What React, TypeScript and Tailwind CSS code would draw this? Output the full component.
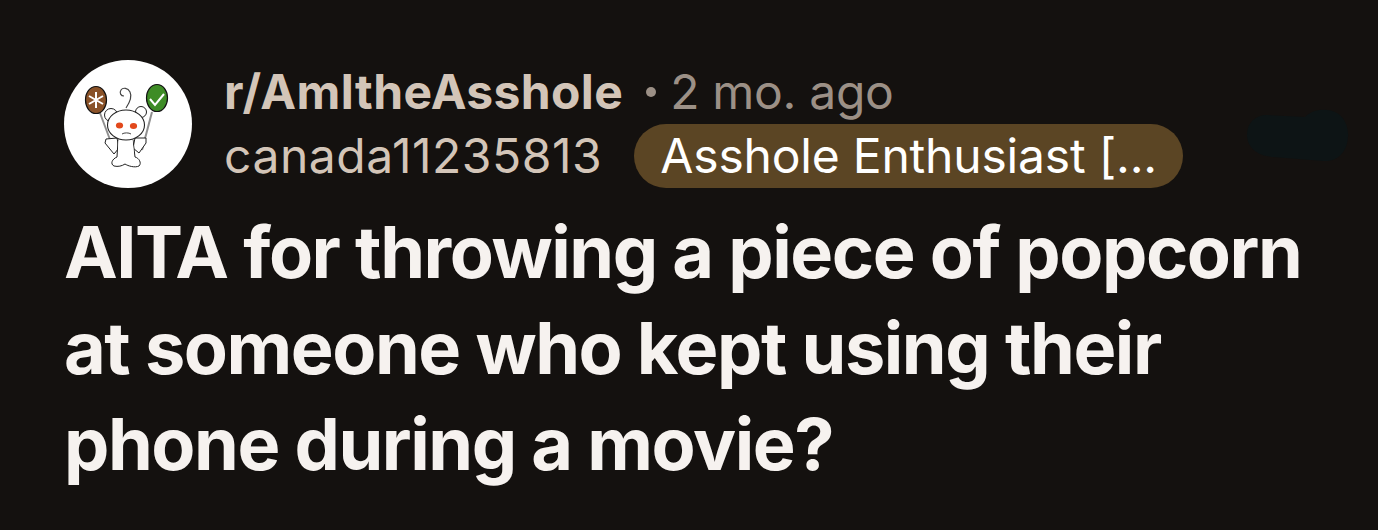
const Snoo = () => (
  <svg viewBox="0 0 128 128" className="w-32 h-32 shrink-0 rounded-full bg-white">
    {/* balloon strings */}
    <path d="M36 53 L51 93" stroke="#8f8f8f" strokeWidth="2" fill="none" />
    <path d="M88 52 L78 90" stroke="#8f8f8f" strokeWidth="2" fill="none" />
    {/* antenna */}
    <path d="M62 48 C66 42 68 36 66 32 C64 28 59 27 57 30 C55 33 57 36 60 36" stroke="#444" strokeWidth="1.2" fill="none" />
    {/* arms */}
    <path d="M53 78 L42 79 L41 83 L50 94 L55 88 Z" fill="#fff" stroke="#222" strokeWidth="1" />
    <path d="M71 78 L82 78 L82 83 L75 93 L69 88 Z" fill="#fff" stroke="#222" strokeWidth="1" />
    {/* body and feet */}
    <path d="M54 80 L53 97 C48 99 46 104 50 106 C54 107 58 106 61 104 C64 106 71 108 75 106 C78 103 75 98 71 97 L69 80 Z" fill="#fff" stroke="#222" strokeWidth="1" />
    <path d="M54.5 78 H68.5 L70 96 H54 Z" fill="#fff" />
    {/* ears */}
    <circle cx="47" cy="55" r="6.5" fill="#fff" stroke="#222" strokeWidth="1" />
    <circle cx="77" cy="52" r="5.5" fill="#fff" stroke="#222" strokeWidth="1" />
    {/* head */}
    <ellipse cx="62" cy="65" rx="18.5" ry="15" fill="#fff" stroke="#222" strokeWidth="1.1" />
    <ellipse cx="55.5" cy="65.5" rx="3.6" ry="3" fill="#e2491c" />
    <ellipse cx="69.5" cy="66" rx="3.6" ry="3" fill="#e2491c" />
    <path d="M58 74 C60 72.5 65 72.5 67 74" stroke="#444" strokeWidth="1" fill="none" />
    {/* brown balloon */}
    <ellipse cx="32" cy="40" rx="10.5" ry="13.5" fill="#8a5228" stroke="#111" strokeWidth="1.2" />
    <path d="M32 32 V48 M25 36 L39 44 M39 36 L25 44" stroke="#fff" strokeWidth="2" />
    {/* green balloon */}
    <ellipse cx="93" cy="38" rx="10.5" ry="13.5" fill="#3e8c26" stroke="#111" strokeWidth="1.2" />
    <path d="M86 39 L91 45 L100 34" stroke="#fff" strokeWidth="2" fill="none" />
  </svg>
);

export default function App() {
  return (
    <div className="relative w-[1378px] h-[530px] overflow-hidden bg-[#14110f] px-16 pt-[60px] font-['Inter',sans-serif]">
      <div className="flex items-start gap-8">
        <Snoo />
        <div className="flex flex-col">
          <div className="flex items-center h-16 text-[48px] leading-[64px]">
            <span className="font-bold tracking-[0.35px] text-[#d3c5b8]">r/AmItheAsshole</span>
            <span className="ml-[23px] w-[10px] h-[10px] rounded-full bg-[#9c9086]" />
            <span className="ml-[14px] tracking-[-0.3px] text-[#9c9086]">2 mo. ago</span>
          </div>
          <div className="flex items-center h-16 text-[48px] leading-[64px]">
            <span className="tracking-[0.55px] text-[#d3c5b8]">canada11235813</span>
            <span className="ml-[32px] flex items-center h-16 px-[26px] rounded-full bg-[#5b4524] tracking-[-0.2px] text-white">
              Asshole Enthusiast [...
            </span>
          </div>
        </div>
      </div>
      <h1 className="mt-4 w-[1250px] text-[72px] leading-[96px] font-bold tracking-[-1.44px] text-[#f6f2ef]">
        AITA for throwing a piece of popcorn at someone who kept using their phone during a movie?
      </h1>
      {/* dark smudge over the right of the header */}
      <svg viewBox="0 0 102 54" className="absolute left-[1247px] top-[109px] w-[102px] h-[54px]">
        <path d="M20 6 L58 8 C64 2 72 0 80 1 C94 2 102 14 101 28 C100 44 90 53 76 52 L26 48 C10 47 0 38 0 26 C0 14 8 6 20 6 Z" fill="#0d1415" />
      </svg>
    </div>
  );
}
